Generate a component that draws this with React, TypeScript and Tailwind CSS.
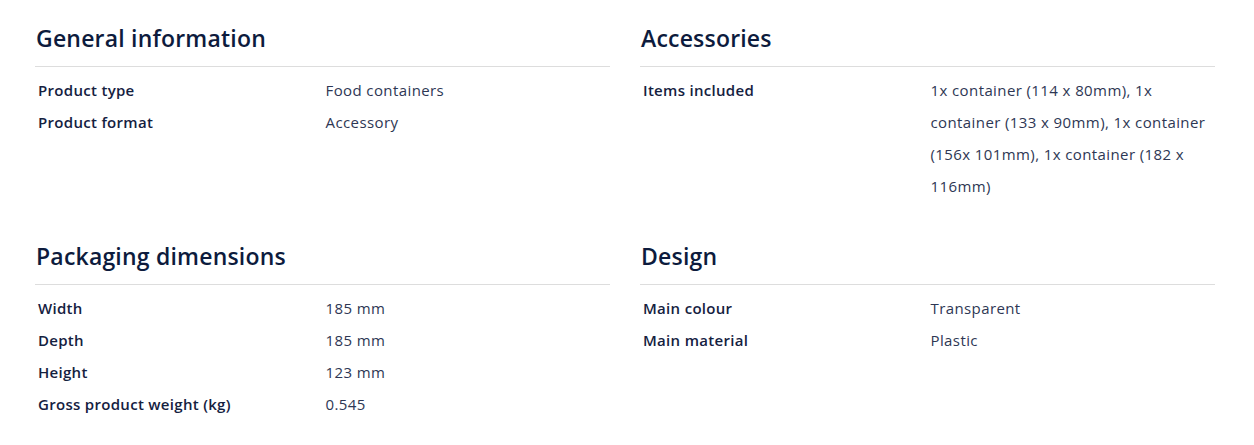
const sections: { title: string; rows: [string, string][] }[] = [
  {
    title: 'General information',
    rows: [
      ['Product type', 'Food containers'],
      ['Product format', 'Accessory'],
    ],
  },
  {
    title: 'Accessories',
    rows: [
      [
        'Items included',
        '1x container (114 x 80mm), 1x container (133 x 90mm), 1x container (156x 101mm), 1x container (182 x 116mm)',
      ],
    ],
  },
  {
    title: 'Packaging dimensions',
    rows: [
      ['Width', '185 mm'],
      ['Depth', '185 mm'],
      ['Height', '123 mm'],
      ['Gross product weight (kg)', '0.545'],
    ],
  },
  {
    title: 'Design',
    rows: [
      ['Main colour', 'Transparent'],
      ['Main material', 'Plastic'],
    ],
  },
]

function SpecSection({ title, rows }: { title: string; rows: [string, string][] }) {
  return (
    <div className="flex flex-col">
      <h2 className="h-9 pl-px text-[23px] leading-9 font-semibold tracking-[0.2px] text-[#0d1b3d]">{title}</h2>
      <div className="mt-[10px] h-px bg-[#dddddd]" />
      <dl className="mt-[7px] flex flex-col">
        {rows.map(([label, value]) => (
          <div key={label} className="grid grid-cols-2">
            <dt className="px-[3px] text-[15px] leading-8 font-semibold tracking-[0.3px] text-[#15213f]">{label}</dt>
            <dd className="pl-[3px] pr-0.5 text-[15px] leading-8 tracking-[0.4px] text-[#2e3754]">{value}</dd>
          </div>
        ))}
      </dl>
    </div>
  )
}

export default function App() {
  return (
    <div className="min-h-screen bg-white pt-5 pl-[35px] pr-[39px] font-['Open_Sans','Inter',sans-serif]">
      <div className="grid grid-cols-2 gap-x-[30px] gap-y-9">
        {sections.map((section) => (
          <SpecSection key={section.title} title={section.title} rows={section.rows} />
        ))}
      </div>
    </div>
  )
}
